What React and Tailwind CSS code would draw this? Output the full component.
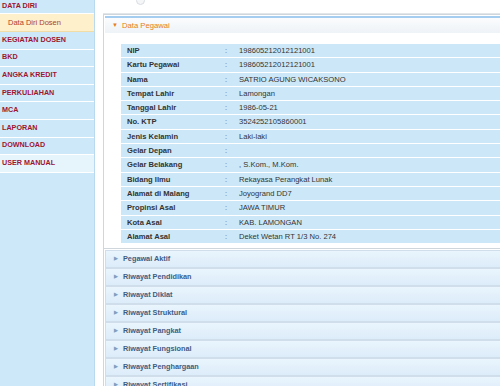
import React from "react";

const menu = [
  "KEGIATAN DOSEN",
  "BKD",
  "ANGKA KREDIT",
  "PERKULIAHAN",
  "MCA",
  "LAPORAN",
  "DOWNLOAD",
  "USER MANUAL",
];

const pegawai = [
  ["NIP", "198605212012121001"],
  ["Kartu Pegawai", "198605212012121001"],
  ["Nama", "SATRIO AGUNG WICAKSONO"],
  ["Tempat Lahir", "Lamongan"],
  ["Tanggal Lahir", "1986-05-21"],
  ["No. KTP", "3524252105860001"],
  ["Jenis Kelamin", "Laki-laki"],
  ["Gelar Depan", ""],
  ["Gelar Belakang", ", S.Kom., M.Kom."],
  ["Bidang Ilmu", "Rekayasa Perangkat Lunak"],
  ["Alamat di Malang", "Joyogrand DD7"],
  ["Propinsi Asal", "JAWA TIMUR"],
  ["Kota Asal", "KAB. LAMONGAN"],
  ["Alamat Asal", "Deket Wetan RT 1/3 No. 274"],
];

const sections = [
  "Pegawai Aktif",
  "Riwayat Pendidikan",
  "Riwayat Diklat",
  "Riwayat Struktural",
  "Riwayat Pangkat",
  "Riwayat Fungsional",
  "Riwayat Penghargaan",
  "Riwayat Sertifikasi",
];

function Sidebar() {
  return (
    <div className="w-[95px] shrink-0 bg-[#cde8f9] border-r border-[#b9d9ee] text-[7.2px] font-bold text-[#9e1530]">
      <div className="h-[14px] flex items-center pl-[2px] border-b border-white">DATA DIRI</div>
      <div className="h-[18px] flex items-center pl-[8px] bg-[#fdf0cb] border-b border-[#f1dca6] text-[#b0402a] font-normal text-[7.5px]">
        Data Diri Dosen
      </div>
      {menu.map((m) => (
        <div
          key={m}
          className={
            "h-[17.6px] flex items-center pl-[2px] border-b border-white " +
            (m === "USER MANUAL" ? "bg-[#e6f4fc]" : "")
          }
        >
          {m}
        </div>
      ))}
    </div>
  );
}

function DataPegawai() {
  return (
    <div className="border border-[#cfd6dc] border-r-0 p-[1px] pr-0">
      <div className="h-[17px] flex items-center gap-[4px] pl-[7px] border-t-2 border-[#a4cdf0] bg-gradient-to-b from-[#fbfcfd] to-[#eef3f7] text-[7.7px] text-[#e77d20]">
        <span className="text-[6px]">▼</span>
        <span>Data Pegawai</span>
      </div>
      <div className="bg-white pt-[11px] pb-[3px] pl-[16px]">
        {pegawai.map(([k, v]) => (
          <div
            key={k}
            className="h-[14.3px] flex items-center bg-[#cce8f8] border-b border-white text-[7.6px] text-[#333]"
          >
            <div className="w-[104px] pl-[6px] font-bold">{k}</div>
            <div className="w-[14px] text-[#666]">:</div>
            <div>{v}</div>
          </div>
        ))}
      </div>
    </div>
  );
}

function Section({ title }) {
  return (
    <div className="h-[18px] shrink-0 flex items-center gap-[5px] pl-[8px] border border-r-0 border-[#cfdeea] bg-gradient-to-b from-[#eaf5fd] to-[#dcecf9] text-[7.3px] font-bold text-[#3e5c82]">
      <span className="text-[5px] text-[#7f9fc0]">▶</span>
      <span>{title}</span>
    </div>
  );
}

export default function App() {
  return (
    <div
      className="w-[500px] h-[386px] overflow-hidden flex bg-white"
      style={{ fontFamily: '"Liberation Sans", Arial, sans-serif' }}
    >
      <Sidebar />
      <div className="flex-1 pl-[8px] flex flex-col">
        <div className="h-[13px] shrink-0 relative">
          <div className="absolute left-[33px] -top-[4px] w-[9px] h-[9px] rounded-full border border-[#d8dde2] bg-[#f4f6f8]" />
        </div>
        <div className="shrink-0 border-t border-[#e3e6e9]">
          <DataPegawai />
        </div>
        <div className="border-l border-[#cfd6dc] flex-1 pl-[1px] pt-[1px] flex flex-col">
          {sections.map((s) => (
            <Section key={s} title={s} />
          ))}
        </div>
      </div>
    </div>
  );
}
